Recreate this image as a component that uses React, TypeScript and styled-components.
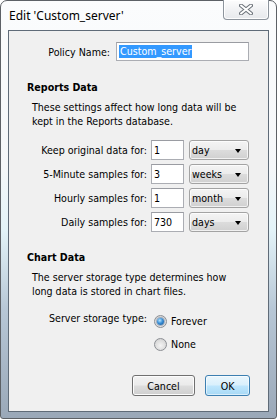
import React from 'react';
import styled, { createGlobalStyle } from 'styled-components';

const GlobalStyle = createGlobalStyle`
  html, body {
    margin: 0;
    padding: 0;
    background: #ffffff;
  }
  body {
    font-family: 'DejaVu Sans Condensed', 'DejaVu Sans', sans-serif;
    font-size: 10.6px;
    color: #000;
  }
  * {
    box-sizing: border-box;
  }
`;

const Window = styled.div`
  width: 277px;
  height: 419px;
  border: 1px solid #5d6166;
  border-radius: 7px 7px 3px 3px;
  background: linear-gradient(
    to bottom,
    #fbfcfd 0%,
    #f5f7f9 40%,
    #e3f3f8 55%,
    #b7c7d6 74%,
    #9aa8b8 100%
  );
  padding: 0 7px 6px;
  display: flex;
  flex-direction: column;
`;

const TitleBar = styled.div`
  height: 29px;
  display: flex;
  justify-content: space-between;
  align-items: flex-start;
`;

const Title = styled.div`
  font-family: 'Noto Sans', 'Open Sans', sans-serif;
  font-size: 12px;
  line-height: 16px;
  padding: 7px 0 0 1px;
  color: #000;
`;

const CloseButton = styled.div`
  width: 46px;
  height: 20px;
  margin-top: -1px;
  border: 1px solid #8d949c;
  border-top: none;
  border-radius: 0 0 4px 4px;
  background: linear-gradient(to bottom, #fdfdfd 0%, #f1f2f4 50%, #e7e9ec 100%);
  box-shadow: inset 0 0 0 1px rgba(255, 255, 255, 0.9);
  display: flex;
  align-items: center;
  justify-content: center;
`;

const Client = styled.div`
  flex: 1;
  background: #f0f0f0;
  border: 1px solid #5f6b78;
  display: flex;
  flex-direction: column;
  padding-top: 11px;
`;

const PolicyRow = styled.div`
  display: flex;
  align-items: center;
  gap: 6px;
  height: 19px;
`;

const PolicyLabel = styled.div`
  width: 101px;
  text-align: right;
`;

const TextBox = styled.div<{ $width: number }>`
  width: ${(p) => p.$width}px;
  height: 100%;
  background: #fff;
  border: 1px solid #abadb3;
  border-top-color: #9a9ca2;
  padding: 0 2px;
  display: flex;
  align-items: center;
  line-height: 13px;
`;

const Selected = styled.span`
  background: #3399ff;
  color: #fff;
  padding: 0 1px;
`;

const Heading = styled.div<{ $top: number }>`
  margin-top: ${(p) => p.$top}px;
  padding-left: 18px;
  font-weight: bold;
  line-height: 14px;
`;

const Description = styled.div`
  margin-top: 6px;
  padding-left: 23px;
  line-height: 14px;
`;

const Grid = styled.div`
  margin-top: 12px;
  display: grid;
  grid-template-columns: 138px 33px 61px;
  grid-auto-rows: 20px;
  column-gap: 4px;
  row-gap: 4px;
  align-items: center;
`;

const RowLabel = styled.div`
  text-align: right;
`;

const Select = styled.div`
  height: 20px;
  margin-left: 1px;
  border: 1px solid #a3a3a3;
  border-radius: 3px;
  background: linear-gradient(
    to bottom,
    #f4f4f4 0%,
    #ececec 48%,
    #dcdcdc 52%,
    #d0d0d0 100%
  );
  box-shadow: inset 0 0 0 1px rgba(255, 255, 255, 0.7);
  display: flex;
  align-items: center;
  justify-content: space-between;
  padding: 0 7px 0 2px;
`;

const Arrow = styled.span`
  width: 0;
  height: 0;
  border-left: 3.5px solid transparent;
  border-right: 3.5px solid transparent;
  border-top: 4px solid #000;
  margin-top: 2px;
`;

const StorageRow = styled.div`
  margin-top: 13px;
  display: flex;
  align-items: flex-start;
`;

const StorageLabel = styled.div`
  width: 138px;
  text-align: right;
  line-height: 14px;
`;

const RadioGroup = styled.div`
  margin-left: 7px;
  padding-top: 2px;
  display: flex;
  flex-direction: column;
  gap: 7px;
`;

const RadioOption = styled.label`
  display: flex;
  align-items: center;
  gap: 4px;
  height: 16px;
`;

const RadioCircle = styled.span<{ $checked?: boolean }>`
  width: 13px;
  height: 13px;
  border-radius: 50%;
  border: 1px solid #8c8f94;
  background: radial-gradient(circle at 50% 60%, #f4f4f4 0%, #dcdcdc 60%, #c9c9c9 100%);
  display: flex;
  align-items: center;
  justify-content: center;

  &::after {
    content: '';
    display: ${(p) => (p.$checked ? 'block' : 'none')};
    width: 7px;
    height: 7px;
    border-radius: 50%;
    background: radial-gradient(circle at 40% 35%, #b8e6ff 0%, #3a8fd6 45%, #154f8c 100%);
    box-shadow: 0 0 0 1px rgba(40, 80, 130, 0.35);
  }
`;

const ButtonRow = styled.div`
  margin-top: 23px;
  display: flex;
  justify-content: flex-end;
  gap: 10px;
  padding-right: 18px;
`;

const Button = styled.div<{ $primary?: boolean; $width: number }>`
  width: ${(p) => p.$width}px;
  height: 21px;
  border-radius: 3px;
  border: 1px solid ${(p) => (p.$primary ? '#3c7fb1' : '#707070')};
  background: ${(p) =>
    p.$primary
      ? 'linear-gradient(to bottom, #eaf6fd 0%, #d9f0fc 48%, #bee6fd 52%, #a7d9f5 100%)'
      : 'linear-gradient(to bottom, #f2f2f2 0%, #ebebeb 48%, #dddddd 52%, #cfcfcf 100%)'};
  box-shadow: inset 0 0 0 1px ${(p) => (p.$primary ? 'rgba(255,255,255,0.55)' : '#fcfcfc')};
  display: flex;
  align-items: center;
  justify-content: center;
`;

const rows = [
  { label: 'Keep original data for:', value: '1', unit: 'day' },
  { label: '5-Minute samples for:', value: '3', unit: 'weeks' },
  { label: 'Hourly samples for:', value: '1', unit: 'month' },
  { label: 'Daily samples for:', value: '730', unit: 'days' },
];

const CloseGlyph = () => (
  <svg width="14" height="11" viewBox="0 0 14 11">
    <path d="M2 1.5 L12 9.5 M12 1.5 L2 9.5" stroke="#6d737a" strokeWidth="4" strokeLinecap="round" fill="none" />
    <path d="M2 1.5 L12 9.5 M12 1.5 L2 9.5" stroke="#ffffff" strokeWidth="2" strokeLinecap="round" fill="none" />
  </svg>
);

export default function App() {
  return (
    <>
      <GlobalStyle />
      <Window>
        <TitleBar>
          <Title>Edit 'Custom_server'</Title>
          <CloseButton>
            <CloseGlyph />
          </CloseButton>
        </TitleBar>
        <Client>
          <PolicyRow>
            <PolicyLabel>Policy Name:</PolicyLabel>
            <TextBox $width={133}>
              <Selected>Custom_server</Selected>
            </TextBox>
          </PolicyRow>

          <Heading $top={19}>Reports Data</Heading>
          <Description>
            These settings affect how long data will be
            <br />
            kept in the Reports database.
          </Description>

          <Grid>
            {rows.map((r) => (
              <React.Fragment key={r.label}>
                <RowLabel>{r.label}</RowLabel>
                <TextBox $width={33}>{r.value}</TextBox>
                <Select>
                  <span>{r.unit}</span>
                  <Arrow />
                </Select>
              </React.Fragment>
            ))}
          </Grid>

          <Heading $top={18}>Chart Data</Heading>
          <Description>
            The server storage type determines how
            <br />
            long data is stored in chart files.
          </Description>

          <StorageRow>
            <StorageLabel>Server storage type:</StorageLabel>
            <RadioGroup>
              <RadioOption>
                <RadioCircle $checked />
                Forever
              </RadioOption>
              <RadioOption>
                <RadioCircle />
                None
              </RadioOption>
            </RadioGroup>
          </StorageRow>

          <ButtonRow>
            <Button $width={63}>Cancel</Button>
            <Button $width={45} $primary>
              OK
            </Button>
          </ButtonRow>
        </Client>
      </Window>
    </>
  );
}
